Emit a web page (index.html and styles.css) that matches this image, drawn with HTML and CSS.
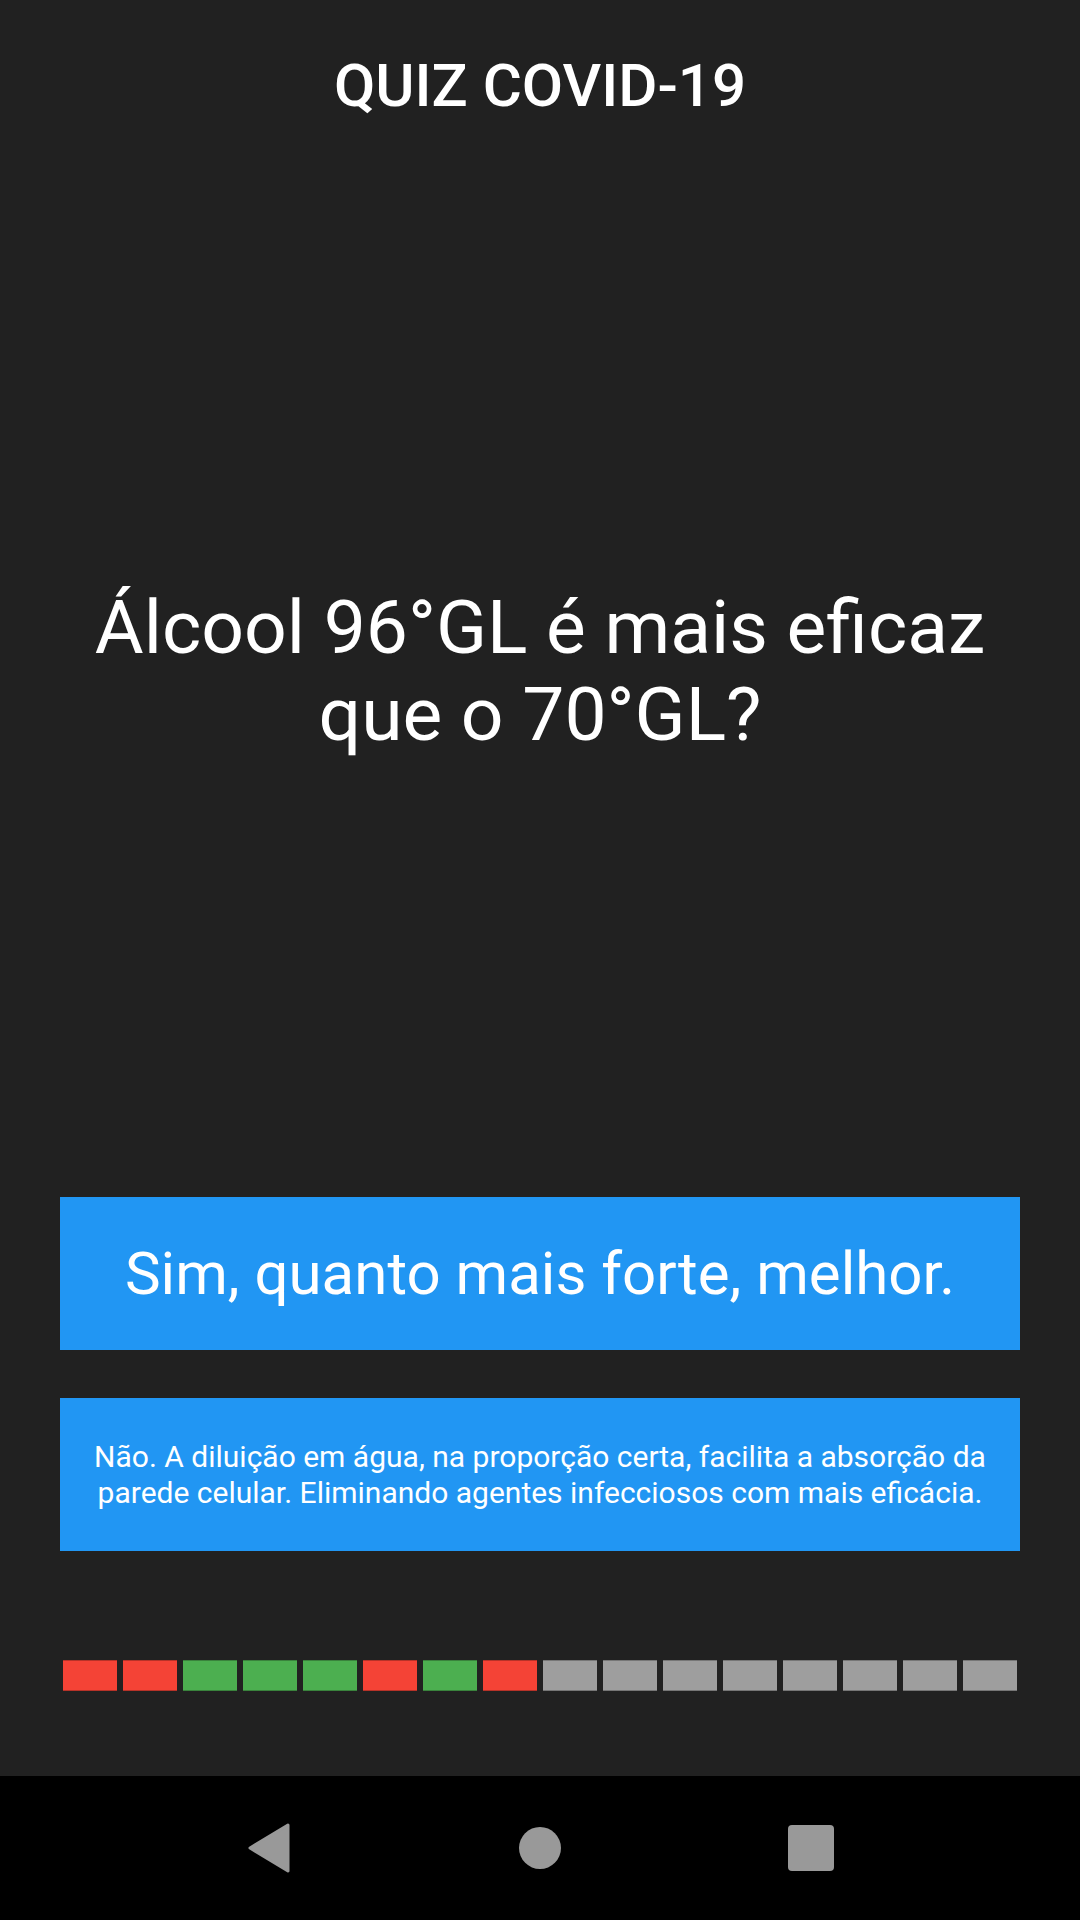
FILE: index.html
```html
<!DOCTYPE html>
<html lang="pt">
<head>
    <meta charset="UTF-8">
    <meta name="viewport" content="width=device-width, initial-scale=1.0">
    <title>Quiz COVID-19</title>
    <link rel="stylesheet" href="styles.css">
</head>
<body>
    <!-- quiz screen -->
    <main class="screen">
        <h1 class="title">QUIZ COVID-19</h1>

        <p class="question">Álcool 96°GL é mais eficaz que o 70°GL?</p>

        <div class="answers">
            <button class="answer answer-big">Sim, quanto mais forte, melhor.</button>
            <button class="answer answer-small">Não. A diluição em água, na proporção certa, facilita a absorção da parede celular. Eliminando agentes infecciosos com mais eficácia.</button>
        </div>

        <!-- one box per question: red = wrong, green = right, grey = not answered yet -->
        <div class="progress">
            <span class="step wrong"></span>
            <span class="step wrong"></span>
            <span class="step right"></span>
            <span class="step right"></span>
            <span class="step right"></span>
            <span class="step wrong"></span>
            <span class="step right"></span>
            <span class="step wrong"></span>
            <span class="step"></span>
            <span class="step"></span>
            <span class="step"></span>
            <span class="step"></span>
            <span class="step"></span>
            <span class="step"></span>
            <span class="step"></span>
            <span class="step"></span>
        </div>
    </main>

    <!-- android navigation bar -->
    <nav class="navbar">
        <span class="nav-item">
            <svg width="44" height="50" viewBox="0 0 44 50"><path d="M41 2 L3 25 L41 48 Z" fill="#999" stroke="#999" stroke-width="3" stroke-linejoin="round"/></svg>
        </span>
        <span class="nav-item">
            <svg width="42" height="42" viewBox="0 0 42 42"><circle cx="21" cy="21" r="21" fill="#999"/></svg>
        </span>
        <span class="nav-item">
            <svg width="46" height="46" viewBox="0 0 46 46"><rect x="0" y="0" width="46" height="46" rx="4" fill="#999"/></svg>
        </span>
    </nav>
</body>
</html>
```

FILE: styles.css
```css
body {
    margin: 0;
    background-color: #212121;
    font-family: Roboto, "Liberation Sans", sans-serif;
    color: #ffffff;
}
.screen {
    height: 1776px;
    display: flex;
    flex-direction: column;
}
.title {
    margin: 51px 0 0;
    font-size: 60px;
    line-height: 70px;
    font-weight: 500;
    text-align: center;
}
.question {
    margin: 463px 60px 0;
    font-size: 75px;
    line-height: 87px;
    font-weight: 400;
    text-align: center;
}
.answers {
    margin: 439px 60px 0;
    display: flex;
    flex-direction: column;
    gap: 48px;
}
.answer {
    height: 153px;
    padding: 0 24px;
    border: none;
    border-radius: 0;
    background-color: #2196f3;
    color: #ffffff;
    font-family: Roboto, "Liberation Sans", sans-serif;
    text-align: center;
}
.answer-big {
    font-size: 60px;
    line-height: 70px;
}
.answer-small {
    font-size: 30px;
    line-height: 36px;
}
.progress {
    margin: 109px 63px 0;
    display: flex;
    gap: 6px;
}
.step {
    width: 54px;
    height: 31px;
    background-color: #9e9e9e;
    box-shadow: inset 0 1px rgba(0, 0, 0, 0.25), inset 0 -1px rgba(0, 0, 0, 0.25);
}
.step.wrong {
    background-color: #f44336;
}
.step.right {
    background-color: #4caf50;
}
.navbar {
    height: 144px;
    background-color: #000000;
    display: flex;
    justify-content: center;
    align-items: center;
    gap: 171px;
}
.nav-item {
    width: 100px;
    display: flex;
    justify-content: center;
    align-items: center;
}
```
